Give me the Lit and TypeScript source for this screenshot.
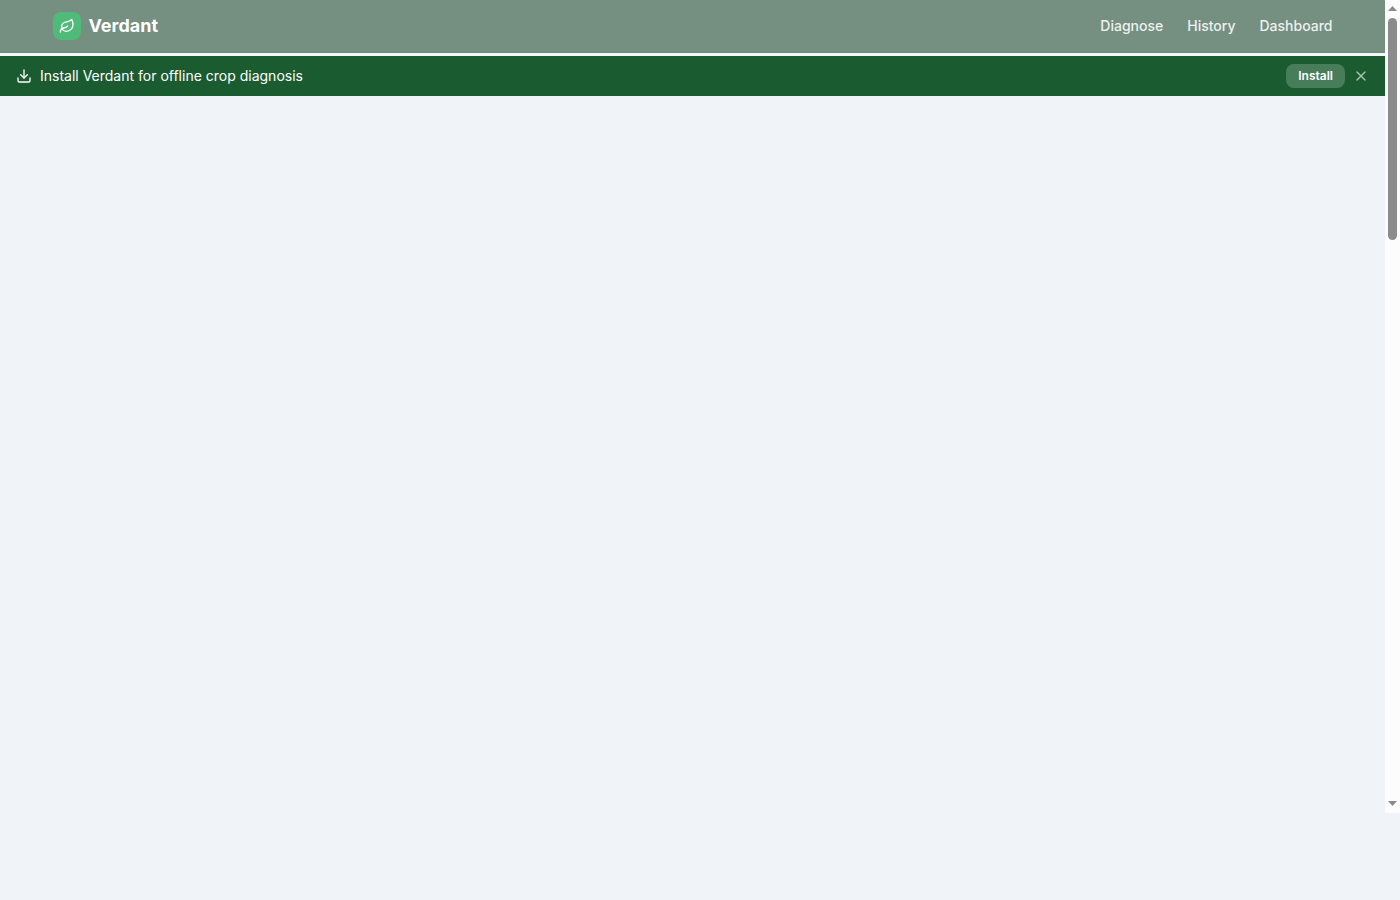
import { LitElement, html, css, svg } from "lit";
import { customElement, state } from "lit/decorators.js";

const leaf = svg`<path d="M11 20A7 7 0 0 1 9.8 6.1C15.5 5 17 4.48 19 2c1 2 2 4.18 2 8 0 5.5-4.78 10-10 10Z"/><path d="M2 21c0-3 1.85-5.36 5.08-6C9.5 14.52 12 13 13 12"/>`;
const download = svg`<path d="M21 15v4a2 2 0 0 1-2 2H5a2 2 0 0 1-2-2v-4"/><path d="m7 10 5 5 5-5"/><path d="M12 15V3"/>`;
const cross = svg`<path d="M18 6 6 18"/><path d="m6 6 12 12"/>`;

const icon = (name: string, shape: unknown) => html`
  <svg class="icon ${name}" viewBox="0 0 24 24" fill="none" stroke="currentColor"
    stroke-width="2" stroke-linecap="round" stroke-linejoin="round" aria-hidden="true">${shape}</svg>`;

@customElement("app-root")
export class AppRoot extends LitElement {
  static styles = css`
    :host {
      display: block;
      min-height: 100vh;
      background: #f0f4f9;
      font-family: Inter, sans-serif;
      font-size: 14px;
      line-height: 20px;
    }
    * { box-sizing: border-box; }
    .shell {
      display: flex;
      height: calc(100vh - 87px);
    }
    .page {
      flex: 1;
      min-width: 0;
      background: linear-gradient(#f5f8fb 56px, transparent 56px);
    }
    .top {
      background: #758f81;
      border-bottom: 1px solid #6f8b7b;
    }
    .inner {
      display: flex;
      align-items: center;
      justify-content: space-between;
      max-width: 1280px;
      height: 52px;
      margin: 0 auto;
    }
    .brand {
      display: flex;
      align-items: center;
      gap: 8px;
      color: #fff;
      font-size: 18px;
      line-height: 28px;
      font-weight: 700;
      text-decoration: none;
    }
    .mark {
      display: grid;
      place-items: center;
      width: 28px;
      height: 28px;
      border-radius: 8px;
      background: #4fbb78;
    }
    .icon {
      display: block;
      width: 16px;
      height: 16px;
    }
    nav {
      display: flex;
      gap: 24px;
    }
    nav a {
      color: #edf1ef;
      font-weight: 500;
      text-decoration: none;
    }
    .banner {
      display: flex;
      align-items: center;
      justify-content: space-between;
      margin-top: 3px;
      padding: 8px 16px;
      background: #1a5c30;
      color: #fff;
    }
    .message, .actions {
      display: flex;
      align-items: center;
      gap: 8px;
    }
    button {
      margin: 0;
      border: 0;
      font: inherit;
      color: inherit;
      cursor: pointer;
    }
    .install {
      padding: 4px 12px;
      border-radius: 8px;
      background: #487d59;
      font-size: 12px;
      line-height: 16px;
      font-weight: 600;
    }
    .close {
      display: block;
      padding: 0;
      background: transparent;
      color: #a9c3b1;
    }
    .scrollbar {
      display: flex;
      flex-direction: column;
      align-items: center;
      width: 15px;
      padding: 6px 0 7px;
      background: #fcfcfc;
    }
    .arrow {
      display: block;
      width: 9px;
      height: 5px;
      fill: #8b8b8b;
    }
    .track {
      flex: 1;
      width: 9px;
      margin: 7px 0;
    }
    .thumb {
      height: 28.6%;
      border-radius: 5px;
      background: #8b8b8b;
    }
  `;

  @state() private bannerOpen = true;

  render() {
    return html`
      <div class="shell">
        <div class="page">
          <header class="top">
            <div class="inner">
              <a class="brand" href="#"><span class="mark">${icon("leaf", leaf)}</span>Verdant</a>
              <nav>
                <a href="#diagnose">Diagnose</a>
                <a href="#history">History</a>
                <a href="#dashboard">Dashboard</a>
              </nav>
            </div>
          </header>
          ${this.bannerOpen
            ? html`<section class="banner">
                <div class="message">${icon("download", download)}<span>Install Verdant for offline crop diagnosis</span></div>
                <div class="actions">
                  <button class="install">Install</button>
                  <button class="close" aria-label="Dismiss" @click=${() => (this.bannerOpen = false)}>${icon("cross", cross)}</button>
                </div>
              </section>`
            : null}
        </div>
        <div class="scrollbar" aria-hidden="true">
          <svg class="arrow" viewBox="0 0 9 5"><path d="M4.5 0 9 5H0Z"/></svg>
          <div class="track"><div class="thumb"></div></div>
          <svg class="arrow" viewBox="0 0 9 5"><path d="M0 0h9L4.5 5Z"/></svg>
        </div>
      </div>
    `;
  }
}
